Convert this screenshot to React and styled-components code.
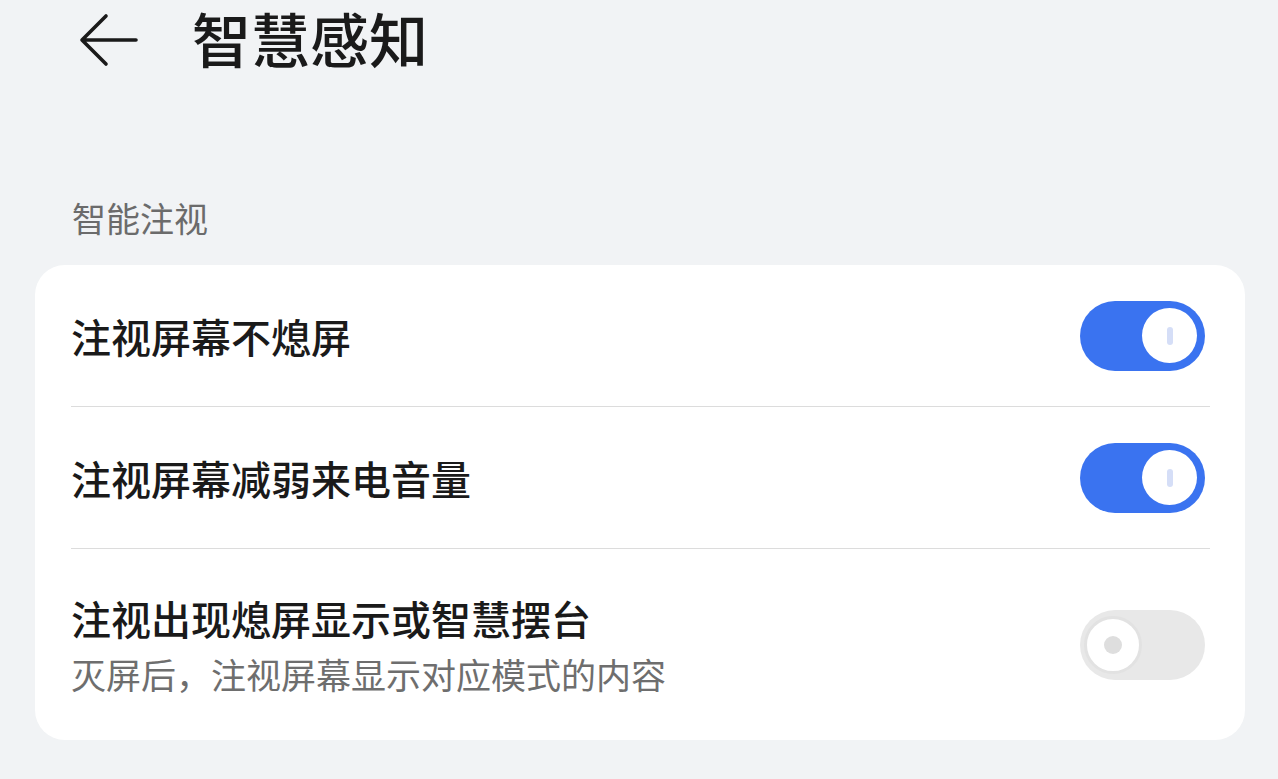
import React from 'react';
import styled, { createGlobalStyle } from 'styled-components';

const GlobalStyle = createGlobalStyle`
  html, body {
    margin: 0;
    padding: 0;
    background: #f1f3f5;
  }
  body {
    font-family: 'Noto Sans CJK SC', 'Noto Sans', sans-serif;
  }
`;

const Page = styled.div`
  width: 1278px;
  height: 779px;
  box-sizing: border-box;
  padding: 0 33px 0 35px;
  background: #f1f3f5;
  overflow: hidden;
`;

const Header = styled.div`
  height: 80px;
  display: flex;
  align-items: center;
  padding-left: 44px;
`;

const BackButton = styled.button`
  width: 60px;
  height: 56px;
  padding: 0;
  border: none;
  background: transparent;
  display: flex;
  align-items: center;
  color: #1a1a1a;
`;

const Title = styled.h1`
  margin: 0 0 4px 53px;
  font-size: 59px;
  line-height: 76px;
  font-weight: 500;
  color: #1a1a1a;
  letter-spacing: 0;
`;

const SectionLabel = styled.div`
  margin-top: 115px;
  padding-left: 37px;
  font-size: 34px;
  line-height: 46px;
  color: #6b6b6b;
`;

const Card = styled.div`
  margin-top: 24px;
  background: #ffffff;
  border-radius: 30px;
  padding: 0 35px 0 36px;
`;

const Row = styled.div`
  display: flex;
  align-items: center;
  justify-content: space-between;
  min-height: ${(p) => (p.tall ? 191 : 142)}px;
  box-sizing: border-box;
  border-bottom: ${(p) => (p.last ? 'none' : '1px solid #dcdcdc')};
`;

const TextBlock = styled.div`
  display: flex;
  flex-direction: column;
`;

const RowTitle = styled.div`
  font-size: 40px;
  line-height: 52px;
  font-weight: 500;
  color: #1a1a1a;
`;

const RowSub = styled.div`
  margin-top: 7px;
  font-size: 35px;
  line-height: 46px;
  color: #6e6e6e;
`;

const Track = styled.div`
  flex: none;
  width: 125px;
  height: 70px;
  margin-right: 5px;
  border-radius: 35px;
  box-sizing: border-box;
  background: ${(p) => (p.on ? '#3a73f0' : '#e8e8e8')};
  display: flex;
  align-items: center;
  justify-content: ${(p) => (p.on ? 'flex-end' : 'flex-start')};
  padding: 0 ${(p) => (p.on ? 8 : 4)}px;
`;

const Knob = styled.div`
  width: ${(p) => (p.on ? 55 : 58)}px;
  height: ${(p) => (p.on ? 55 : 58)}px;
  border-radius: 50%;
  background: #ffffff;
  box-sizing: border-box;
  border: ${(p) => (p.on ? 'none' : '3px solid #e2e2e2')};
  display: flex;
  align-items: center;
  justify-content: center;
`;

const OnMark = styled.div`
  width: 6px;
  height: 18px;
  border-radius: 3px;
  background: #d5def7;
`;

const OffMark = styled.div`
  width: 18px;
  height: 18px;
  border-radius: 50%;
  background: #dedede;
`;

const Switch = ({ on }) => (
  <Track on={on}>
    <Knob on={on}>{on ? <OnMark /> : <OffMark />}</Knob>
  </Track>
);

const BackArrow = () => (
  <svg width="60" height="56" viewBox="0 0 60 56" fill="none">
    <path
      d="M57 28 H4 M27 4 L3 28 L27 52"
      stroke="currentColor"
      strokeWidth="3.6"
      strokeLinecap="round"
      strokeLinejoin="round"
    />
  </svg>
);

const rows = [
  { title: '注视屏幕不熄屏', on: true },
  { title: '注视屏幕减弱来电音量', on: true },
  {
    title: '注视出现熄屏显示或智慧摆台',
    sub: '灭屏后，注视屏幕显示对应模式的内容',
    on: false,
  },
];

const App = () => (
  <>
    <GlobalStyle />
    <Page>
      <Header>
        <BackButton aria-label="返回">
          <BackArrow />
        </BackButton>
        <Title>智慧感知</Title>
      </Header>
      <SectionLabel>智能注视</SectionLabel>
      <Card>
        {rows.map((r, i) => (
          <Row key={r.title} tall={!!r.sub} last={i === rows.length - 1}>
            <TextBlock>
              <RowTitle>{r.title}</RowTitle>
              {r.sub && <RowSub>{r.sub}</RowSub>}
            </TextBlock>
            <Switch on={r.on} />
          </Row>
        ))}
      </Card>
    </Page>
  </>
);

export default App;
